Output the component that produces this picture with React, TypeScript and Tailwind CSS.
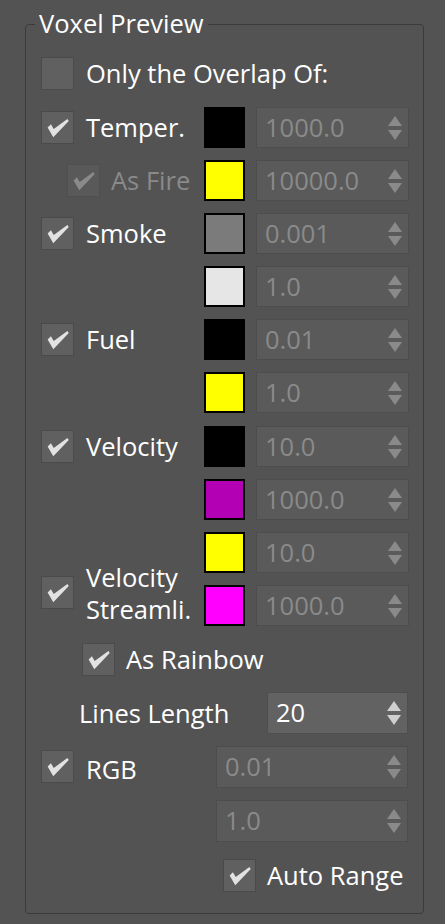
import React from "react";

function CheckMark({ color }: { color: string }) {
  return (
    <svg width="33" height="33" viewBox="0 0 33 33">
      <path d="M6 16.5 L9.5 13 L12.5 18 L27 7.5 L28.5 9.5 L12 27 Z" fill={color} />
    </svg>
  );
}

function Check({ disabled = false, checked = true }: { disabled?: boolean; checked?: boolean }) {
  return (
    <div
      className={
        "w-[33px] h-[33px] shrink-0 border flex items-center justify-center " +
        (disabled ? "bg-[#595959] border-[#4f4f4f]" : "bg-[#606060] border-[#4a4a4a]")
      }
    >
      {checked ? <CheckMark color={disabled ? "#8a8a8a" : "#e2e2e2"} /> : null}
    </div>
  );
}

function Arrows({ color }: { color: string }) {
  return (
    <svg width="14" height="24" viewBox="0 0 14 24" className="shrink-0">
      <path d="M7 0 L14 10 L0 10 Z" fill={color} />
      <path d="M0 14 L14 14 L7 24 Z" fill={color} />
    </svg>
  );
}

function Spinner({ value, enabled = false, w = "w-[153px]", h = "h-[41px]" }: { value: string; enabled?: boolean; w?: string; h?: string }) {
  return (
    <div
      className={
        w +
        " " +
        h +
        " shrink-0 border flex items-center justify-between pl-[8px] pr-[6px] " +
        (enabled ? "bg-[#626262] border-[#4e4e4e] text-white" : "bg-[#5a5a5a] border-[#4d4d4d] text-[#8a8a8a]")
      }
    >
      <span className="leading-none">{value}</span>
      <Arrows color={enabled ? "#cfcfcf" : "#8a8a8a"} />
    </div>
  );
}

function Swatch({ cls }: { cls: string }) {
  return <div className={"w-[41px] h-[41px] shrink-0 border-2 border-black " + cls} />;
}

function Row({
  left,
  swatch,
  value,
}: {
  left?: React.ReactNode;
  swatch: string;
  value: string;
}) {
  return (
    <div className="flex items-center h-[41px]">
      <div className="w-[163px] shrink-0 flex items-center">{left}</div>
      <Swatch cls={swatch} />
      <div className="ml-[11px]">
        <Spinner value={value} />
      </div>
    </div>
  );
}

function Label({ text }: { text: string }) {
  return (
    <div className="flex items-center gap-[12px]">
      <Check />
      <span className="text-white whitespace-nowrap">{text}</span>
    </div>
  );
}

export default function App() {
  return (
    <div className="w-[445px] h-[924px] bg-[#535353] pt-[24px] pl-[25px] font-['Open_Sans',sans-serif] text-[25.5px] overflow-hidden">
      <div className="relative w-[399px] h-[890px] border border-[#3b3b3b] rounded-[4px] pl-[15px] pt-[28px]">
        <div className="absolute left-[9px] top-[-19px] bg-[#535353] px-[4px] leading-[34px] text-white whitespace-nowrap">
          Voxel Preview
        </div>

        <div className="flex items-center h-[41px] gap-[12px]">
          <Check checked={false} />
          <span className="text-white whitespace-nowrap">Only the Overlap Of:</span>
        </div>

        <div className="mt-[13px] flex flex-col gap-[12px]">
          <Row left={<Label text="Temper." />} swatch="bg-black" value="1000.0" />
          <Row
            left={
              <div className="flex items-center gap-[11px] pl-[26px]">
                <Check disabled />
                <span className="text-[#8a8a8a] whitespace-nowrap">As Fire</span>
              </div>
            }
            swatch="bg-[#ffff00]"
            value="10000.0"
          />
          <Row left={<Label text="Smoke" />} swatch="bg-[#7b7b7b]" value="0.001" />
          <Row swatch="bg-[#e6e6e6]" value="1.0" />
          <Row left={<Label text="Fuel" />} swatch="bg-black" value="0.01" />
          <Row swatch="bg-[#ffff00]" value="1.0" />
        </div>

        <div className="mt-[13px] flex flex-col gap-[12px]">
          <Row left={<Label text="Velocity" />} swatch="bg-black" value="10.0" />
          <Row swatch="bg-[#b400b4]" value="1000.0" />
          <div className="flex">
            <div className="w-[163px] shrink-0 flex items-center gap-[12px] pt-[27px]">
              <Check />
              <div className="text-white leading-[32px] whitespace-nowrap">
                <div>Velocity</div>
                <div>Streamli.</div>
              </div>
            </div>
            <div className="flex flex-col gap-[12px]">
              <div className="flex items-center">
                <Swatch cls="bg-[#ffff00]" />
                <div className="ml-[11px]">
                  <Spinner value="10.0" />
                </div>
              </div>
              <div className="flex items-center">
                <Swatch cls="bg-[#ff00ff]" />
                <div className="ml-[11px]">
                  <Spinner value="1000.0" />
                </div>
              </div>
            </div>
          </div>
        </div>

        <div className="mt-[17px] pl-[41px] flex items-center gap-[11px] h-[33px]">
          <Check />
          <span className="text-white whitespace-nowrap">As Rainbow</span>
        </div>

        <div className="mt-[16px] flex items-center h-[42px]">
          <div className="w-[226px] shrink-0 pl-[38px] text-white whitespace-nowrap">Lines Length</div>
          <Spinner value="20" enabled w="w-[141px]" h="h-[42px]" />
        </div>

        <div className="mt-[12px] flex">
          <div className="w-[175px] shrink-0 flex items-start pt-[4px] gap-[12px]">
            <Check />
            <span className="text-white whitespace-nowrap">RGB</span>
          </div>
          <div className="flex flex-col gap-[12px]">
            <Spinner value="0.01" w="w-[192px]" h="h-[42px]" />
            <Spinner value="1.0" w="w-[192px]" h="h-[42px]" />
          </div>
        </div>

        <div className="mt-[17px] pl-[182px] flex items-center gap-[11px] h-[33px]">
          <Check />
          <span className="text-white whitespace-nowrap">Auto Range</span>
        </div>
      </div>
    </div>
  );
}
